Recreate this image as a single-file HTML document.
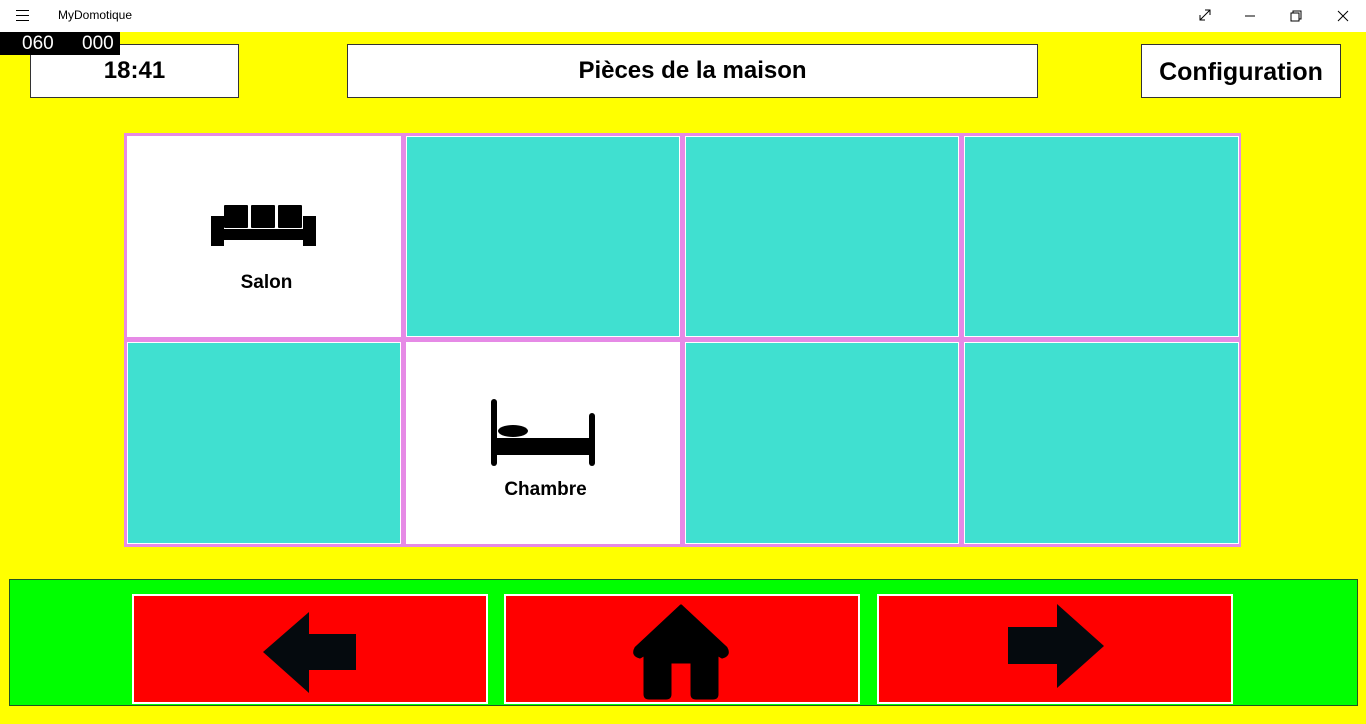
<!DOCTYPE html>
<html><head><meta charset="utf-8"><style>
*{margin:0;padding:0;box-sizing:border-box}
body{width:1366px;height:724px;background:#ffff00;position:relative;overflow:hidden;font-family:"Segoe UI","Liberation Sans",sans-serif}
.a{position:absolute}
.tb{left:0;top:0;width:1366px;height:32px;background:#fff}
.box{background:#fff;border:1px solid #333;display:flex;align-items:center;justify-content:center;font-weight:bold;color:#000}
.cell{position:absolute;background:#40e0d0;border:1px solid #fff}
.w{background:#fff;border:none}
.btn{position:absolute;top:594px;height:110px;background:#f00;border:2px solid #fff}
</style></head><body>
<div class="a tb"></div>
<div class="a" style="left:16px;top:10px;width:13px;height:1px;background:#000;box-shadow:0 5px 0 #000,0 10px 0 #000"></div>
<div class="a" style="left:58px;top:8px;font-size:12px;color:#000">MyDomotique</div>
<svg class="a" style="left:1190px;top:0" width="176" height="32" fill="none" stroke="#000" stroke-width="1">
<path d="M10 20L20 10M15 10h5v5M10 15v5h5"/>
<path d="M55 16h10"/>
<path d="M101 13h8v8h-8zM103 13v-2h8v8h-2"/>
<path d="M148 11l10 10M158 11l-10 10"/>
</svg>
<div class="a box" style="left:30px;top:44px;width:209px;height:54px;font-size:24px;padding-top:0">18:41</div>
<div class="a" style="left:0;top:32px;width:120px;height:23px;background:#000"></div>
<div class="a" style="left:22px;top:32px;color:#fff;font-size:19px;line-height:23px">060</div>
<div class="a" style="left:82px;top:32px;color:#fff;font-size:19px;line-height:23px">000</div>
<div class="a box" style="left:347px;top:44px;width:691px;height:54px;font-size:24px">Pièces de la maison</div>
<div class="a box" style="left:1141px;top:44px;width:200px;height:54px;font-size:25px;padding-top:2px">Configuration</div>

<div class="a" style="left:124px;top:133px;width:1117px;height:414px;background:#e68ae6"></div>
<div class="cell w" style="left:127px;top:136px;width:274px;height:201px"></div>
<div class="cell" style="left:406px;top:136px;width:274px;height:201px"></div>
<div class="cell" style="left:685px;top:136px;width:274px;height:201px"></div>
<div class="cell" style="left:964px;top:136px;width:275px;height:201px"></div>
<div class="cell" style="left:127px;top:342px;width:274px;height:202px"></div>
<div class="cell w" style="left:406px;top:342px;width:274px;height:202px"></div>
<div class="cell" style="left:685px;top:342px;width:274px;height:202px"></div>
<div class="cell" style="left:964px;top:342px;width:275px;height:202px"></div>
<svg class="a" style="left:0;top:0" width="1366" height="724">
<g fill="#000">
<rect x="224" y="205" width="24" height="23" rx="1"/><rect x="251" y="205" width="24" height="23" rx="1"/><rect x="278" y="205" width="24" height="23" rx="1"/>
<rect x="211" y="216" width="13" height="30"/><rect x="303" y="216" width="13" height="30"/><rect x="224" y="229" width="79" height="11"/>
<rect x="491" y="399" width="6" height="67" rx="3"/><rect x="589" y="413" width="6" height="53" rx="3"/>
<rect x="491" y="438" width="104" height="17"/><ellipse cx="513" cy="431" rx="15" ry="6"/>
</g>
</svg>
<div class="a" style="left:127px;top:272px;width:279px;text-align:center;font-size:19px;font-weight:600">Salon</div>
<div class="a" style="left:406px;top:479px;width:279px;text-align:center;font-size:19px;font-weight:600">Chambre</div>

<div class="a" style="left:9px;top:579px;width:1349px;height:127px;background:#00ff00;border:1px solid #225522"></div>
<div class="btn" style="left:132px;width:356px"></div>
<div class="btn" style="left:504px;width:356px"></div>
<div class="btn" style="left:877px;width:356px"></div>
<svg class="a" style="left:0;top:0" width="1366" height="724">
<g fill="#050a0e">
<path d="M263 652L309 612V634H356V670H309V693Z"/>
<path d="M1104 646L1057 604V627H1008V664H1057V688Z"/>
<path d="M681 606L726 648Q730 655 722 657L717 654V694Q717 698 713 698H696Q692 698 692 694V662H670V694Q670 698 666 698H649Q645 698 645 694V654L640 657Q632 655 636 648Z" fill="#000" stroke="#000" stroke-width="3" stroke-linejoin="round"/>
</g>
</svg>
</body></html>
